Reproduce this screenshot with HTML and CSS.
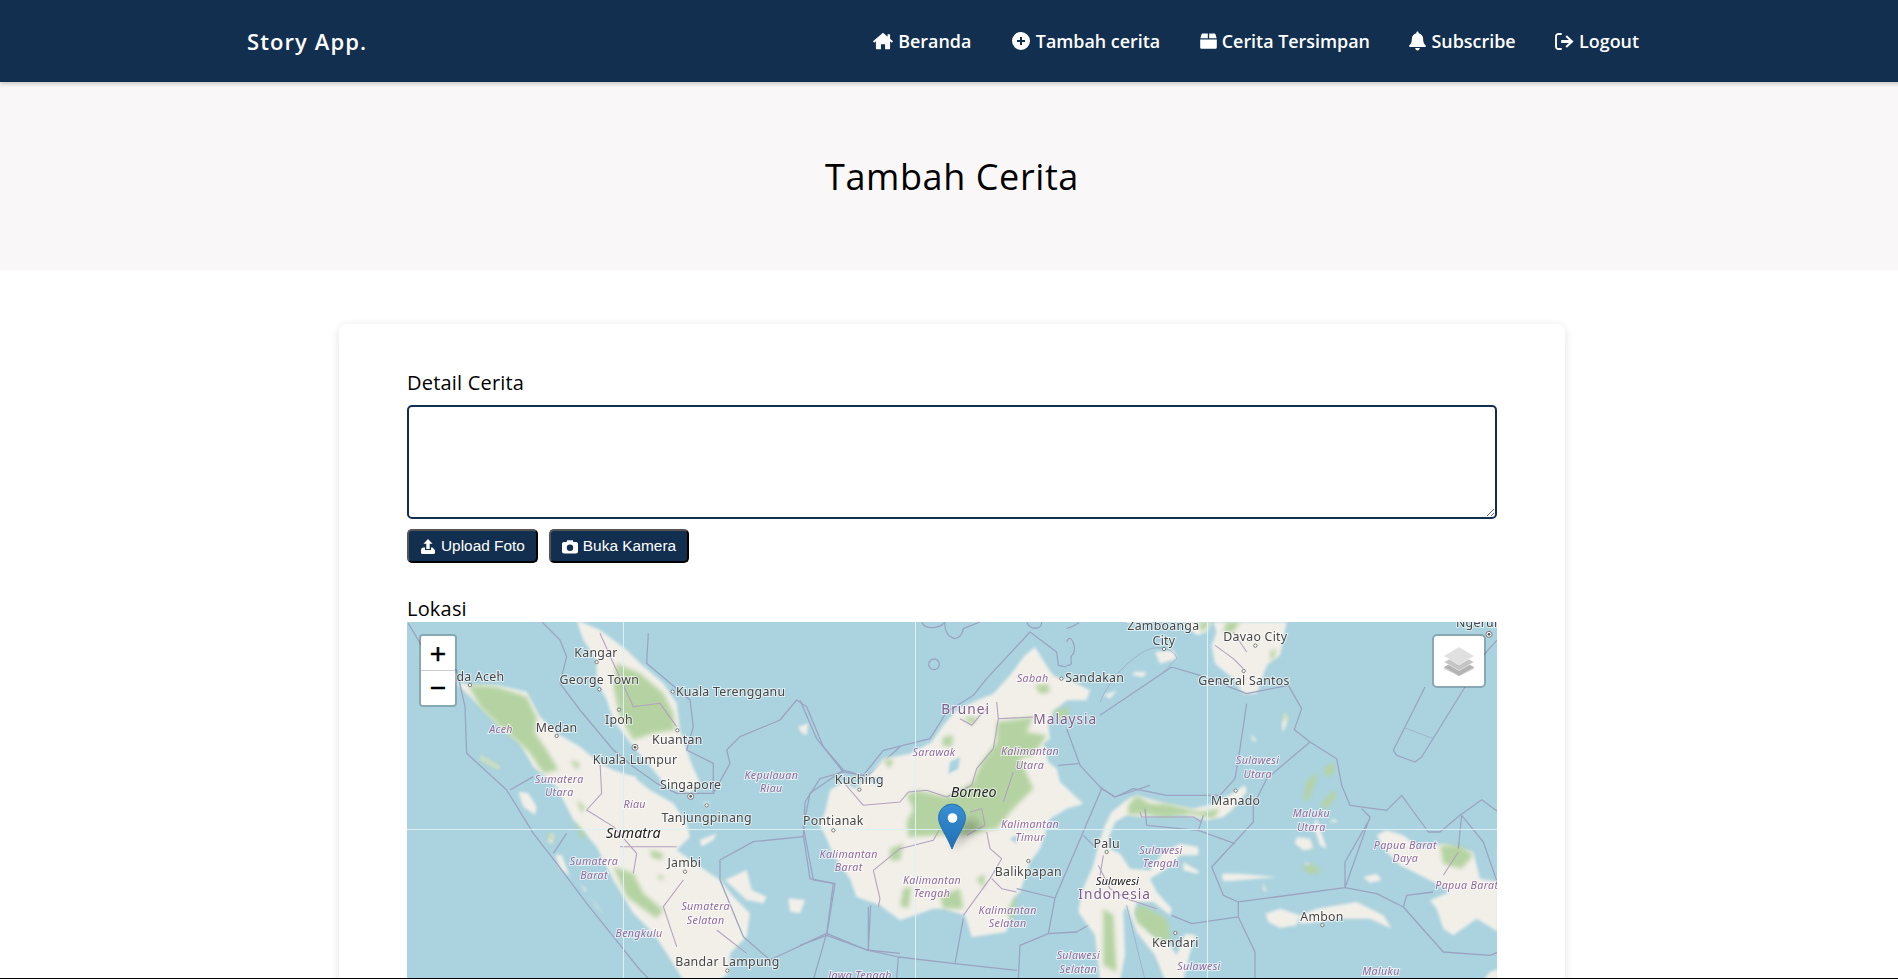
FILE: index.html
```html
<!DOCTYPE html>
<html lang="id">
<head>
    <meta charset="utf-8">
    <title>Story App.</title>
    <link rel="stylesheet" href="styles.css">
</head>
<body>
    <header class="topbar">
        <a class="brand" href="#">Story App.</a>
        <nav class="topnav">
            <a href="#"><svg class="ico ico-home" viewBox="0 0 24 20"><path d="M12 0 0 10.400 1.400 12 3.500 10.300V19c0 .6.400 1 1 1H9.500v-6h5v6h5c.6 0 1-.4 1-1v-8.700L22.600 12 24 10.400 20.500 7.400V2h-3v2.800z"/></svg>Beranda</a>
            <a href="#"><svg class="ico ico-plus" viewBox="0 0 20 20"><path fill-rule="evenodd" d="M10 1a9 9 0 1 0 0 18 9 9 0 0 0 0-18zM9 6h2v3h3v2h-3v3H9v-3H6V9h3z"/></svg>Tambah cerita</a>
            <a href="#"><svg class="ico ico-box" viewBox="0 0 18 18"><path d="M3 1h5.300v5H.4L1.500 2.200C1.700 1.500 2.300 1 3 1zM9.700 1H15c.7 0 1.300.5 1.500 1.200L17.600 6H9.700zM.2 7.300h17.600V15.500c0 1-.7 1.700-1.700 1.700H1.900c-1 0-1.700-.7-1.700-1.700z"/></svg>Cerita Tersimpan</a>
            <a href="#"><svg class="ico ico-bell" viewBox="0 0 18 20"><path d="M9 0c-.7 0-1.200.5-1.200 1.200v.7C5 2.400 3 4.800 3 7.800c0 4.300-1.500 5.500-2.600 6.700-.6.700-.2 1.800.8 1.800h15.600c1 0 1.400-1.100.8-1.800C16.500 13.300 15 12.100 15 7.800c0-3-2-5.400-4.800-5.900v-.7C10.200.5 9.700 0 9 0zM6.600 17.400c0 1.400 1.100 2.600 2.400 2.600s2.400-1.200 2.400-2.600z"/></svg>Subscribe</a>
            <a href="#"><svg class="ico ico-out" viewBox="0 0 20 18"><path d="M7 2H3.500C2.700 2 2 2.700 2 3.500v11c0 .8.700 1.500 1.500 1.500H7v2H3.500C1.600 18 0 16.400 0 14.500v-11C0 1.600 1.600 0 3.500 0H7z"/><path d="M12.500 2.500 19.600 9l-7.100 6.500-1.500-1.400 3.700-3.600H6.500v-3h8.200L11 4z"/></svg>Logout</a>
        </nav>
    </header>

    <section class="hero">
        <h1>Tambah Cerita</h1>
    </section>

    <main class="card">
        <label class="field-label" for="description">Detail Cerita</label>
        <textarea id="description" class="story-input"></textarea>
        <div class="photo-actions">
            <button class="btn" type="button"><svg class="btn-ico" viewBox="0 0 16 15"><path d="M8 0l4.500 4.800H9.700V10H6.300V4.800H3.500z"/><path d="M3.500 8.500H5V11h6V8.500h1.500L15 11v2.500c0 .8-.6 1.500-1.500 1.500h-11C1.600 15 1 14.300 1 13.500V11c0-1.400 1.100-2.500 2.500-2.500z"/></svg>Upload Foto</button>
            <button class="btn" type="button"><svg class="btn-ico" viewBox="0 0 16 14"><path fill-rule="evenodd" d="M5.200.8 4.600 2.500H2C.9 2.500 0 3.400 0 4.500V12c0 1.100.9 2 2 2h12c1.100 0 2-.9 2-2V4.500c0-1.100-.9-2-2-2h-2.600L10.800.8zM8 5a3.200 3.200 0 1 1 0 6.400A3.200 3.200 0 0 1 8 5z"/></svg>Buka Kamera</button>
        </div>

        <div class="field-label location-label">Lokasi</div>
        <div class="map">
            <svg class="map-art" viewBox="407 622 1090 357" width="1090" height="357">
                <rect class="sea" x="407" y="622" width="1090" height="357"/>

                <g class="z4">
                    <path class="land" d="M165 185L210 195 290 195 380 215 420 290 470 340 540 380 600 430 640 450 700 470 750 510 820 550 860 610 870 650 830 690 900 740 960 780 1000 830 1050 880 1040 950 990 1000 985 1060 960 1080 850 1080 800 1000 760 940 700 880 640 780 590 680 520 600 470 500 400 440 360 370 300 320 240 260 190 210Z"/>
                    <path class="land" d="M530 0L600 30 680 90 720 130 790 190 830 250 840 330 870 420 900 490 870 520 800 500 760 450 700 380 640 300 620 240 590 180 590 120 550 60Z"/>
                    <path class="land" d="M240 405L300 440 295 448 245 420ZM355 515L385 520 410 560 405 585 370 560ZM450 640L462 645 458 672 445 665ZM465 705L485 705 510 770 480 745ZM540 790L560 810 555 815ZM570 825L610 885 590 860ZM975 780L1040 750 1055 810 1100 830 1090 850 1040 840ZM1165 835L1215 840 1200 880 1170 875ZM680 470L710 470 700 495 685 490ZM900 660L950 640 940 660 905 680ZM1195 320L1225 310 1220 345 1205 340ZM910 545L930 550 920 565Z"/>
                    <path class="green" d="M205 195L290 200 380 230 410 290 405 340 440 390 475 450 430 460 390 400 360 370 300 320 240 260Z"/>
                    <path class="green" d="M650 130L720 160 790 220 820 280 825 330 760 340 700 360 660 290 640 200Z"/>
                    <path class="green" d="M640 740L700 760 730 820 790 870 770 895 720 860 680 830Z"/>
                    <path class="green" d="M750 690L790 700 785 720 755 712ZM770 770L790 765 788 782ZM520 600L560 650 545 655ZM240 405L300 440 295 448 245 420ZM440 640L462 645 458 672ZM510 420L540 430 530 450ZM530 540L555 560 545 580Z"/>
                    <path class="sea-line" d="M25 10L90 120 170 150 195 260 200 400 320 510 400 640 470 730 560 850 640 950 720 1050 750 1080"/>
                    <path class="sea-line" d="M420 0L480 60 500 110 480 190 540 270 640 390 700 440 770 490 830 520 940 520 990 430 980 390 1020 350 1140 300 1190 240 1220 260 1270 380 1330 450 1400 470 1500 380"/>
                    <path class="sea-line" d="M745 40L740 130 870 240 880 320 860 390 940 430 940 520M1330 450L1230 520 1210 620 1240 780 1300 790 1280 940M1210 650L1060 665 960 720 960 780 1030 950 1110 1020 1280 940 1400 990 1500 1000M1280 940L1240 1080M330 510L400 470M460 700L500 640M1405 860V990"/>
                    <path class="state-line" d="M600 430L605 520 560 570 640 620 710 700 700 760M660 680L830 680M850 780L790 860 800 890 830 980M600 40L640 130 700 260 780 250 830 320M950 930L1040 1000"/>
                </g>

                <g class="z8">
                    <path class="land" d="M90 505L130 480 165 500 200 470 250 410 330 395 395 360 430 310 470 265 520 240 555 225 580 215 630 160 675 100 705 75 745 140 765 165 800 170 870 205 860 235 800 235 760 270 745 310 750 350 730 365 745 420 770 440 780 480 850 545 800 560 750 590 720 680 690 720 660 810 640 830 620 930 515 945 495 880 430 860 400 860 300 895 240 850 170 825 150 770 100 700 80 650 60 610 75 570Z"/>
                    <path class="green" d="M590 300L700 285 680 330 740 340 700 400 660 410 700 500 640 560 590 620 560 625 500 640 410 640 325 645 320 600 340 560 320 520 350 505 440 525 520 480 545 420 590 360Z"/>
                    <path class="green" d="M430 345L460 340 455 375 425 370ZM270 680L310 665 300 715 270 715ZM705 190L745 185 750 210 720 215ZM490 285L535 285 515 310ZM420 820L480 800 490 860 430 860ZM250 415L280 410 270 440ZM760 265L810 255 800 290 770 290ZM620 870L650 815 640 900ZM310 800L335 795 325 860 300 850ZM530 770L555 755 550 800Z"/>
                    <path class="water" d="M450 420L480 405 475 440 445 455ZM630 650L650 640 650 665ZM185 470L250 465 235 490Z"/>
                    <path class="sea-line" d="M130 450L50 350 0 235M130 450L190 460 250 385 390 350 440 270 520 220 560 170 690 30 770 90 775 130 800 135M130 450L60 470 15 540 10 640 30 770 105 785 80 940 0 970M80 940L205 985 295 1005 465 1025 650 1045M205 985L212 850M465 1025L490 890M295 1005L290 1070M650 800L765 828 905 500 945 525 1050 490M765 828L745 935 660 970 655 1070M745 935L830 930 890 895M800 320L840 430 905 500M775 430L835 425M850 640L890 680"/>
                    <circle class="sea-line" cx="402" cy="127" r="16"/>
                    <path class="sea-line" d="M365 0C375 25 420 20 435 0M435 0C430 50 480 70 490 20L540 0M800 60C810 30 830 70 820 95 800 110 830 130 800 130M680 0C690 25 725 25 725 0M800 20C830 10 840 0 835 0"/>
                    <path class="state-line" d="M130 480L190 550 300 540 325 510 380 505 440 525 515 490 530 440 580 380 595 290 700 285M480 290L515 310 540 280 560 260M590 240L595 290M220 745L240 830 235 855M220 745L300 680 400 655 420 620M560 630L570 680 605 710 570 770 490 880M575 770L605 800 650 810M510 570L545 560 555 610 500 640M640 450L610 540"/>
                </g>

                <g class="z9">
                    <path class="land" d="M435 490L440 510 400 560 370 585 320 595 260 580 200 575 130 585 80 580 45 600 25 650 30 680 60 695 90 740 150 745 190 690 240 665 295 675 295 700 240 700 200 740 150 770 170 810 215 860 210 880 160 840 110 840 105 880 150 930 210 970 230 1000 255 935 290 940 270 990 250 1075 195 1075 165 1000 110 930 80 850 70 870 75 1000 60 1075 0 1075 -15 940 -65 870 -55 810 -20 730 -5 670 15 610 35 570 85 530 110 520 200 545 280 560 340 545 395 515Z"/>
                    <path class="land" d="M340 0H560L540 100 500 130 470 215 430 215 400 170 345 125 335 70 350 30ZM250 0H335L320 30 290 40 270 20ZM165 90L220 85 230 110 180 125ZM365 755L420 755 530 765 420 775 370 778ZM490 780L500 810 490 805ZM600 880L650 860 770 840 850 880 875 920 810 890 720 890 660 900 600 905ZM497 875L540 860 600 880 590 910 540 918 505 900ZM830 640L860 625 910 640 960 680 1030 665 1120 690 1140 770 1195 780 1195 930 1130 890 1060 940 1030 920 1010 860 990 835 1050 810 1000 780 960 760 900 730 860 690ZM790 765L830 755 845 775 810 782ZM1170 1050L1195 1040V1075H1150ZM555 270L565 290 550 330 545 310ZM452 335L470 355 460 360ZM590 645L630 650 640 680 610 685 585 665ZM650 590L680 680 660 670 640 610ZM700 590L715 600 690 600ZM610 720L640 730 620 730ZM10 220L50 205 30 230ZM100 150L140 150 130 165 100 160ZM250 720L300 750 290 755 250 745Z"/>
                    <path class="green" d="M85 550L110 520 150 545 200 545 300 570 360 560 340 590 270 575 190 585 130 575 85 580Z"/>
                    <path class="green" d="M105 860L130 850 200 890 215 960 170 950 110 900ZM10 860L40 880 50 1050 10 1030ZM670 440L700 420 705 450 680 465ZM640 460L655 455 625 535 610 535 620 480ZM660 550L700 505 710 520 680 560ZM605 735L635 725 665 750 630 755ZM1020 670L1080 670 1120 700 1085 740 1030 725ZM380 0H420L400 30 370 30ZM510 90L530 80 515 125ZM555 270L565 290 555 300 550 285ZM300 0H330L315 25 300 25ZM630 685L640 680 640 690Z"/>
                    <path class="sea-line" d="M0 280L215 135 300 160 440 215 565 190 605 260 583 323 630 360 710 410 725 490 750 550 860 565 905 520 985 630 1020 630 1080 580 1145 533 1195 570M440 245L420 380 405 470 360 520 200 520 100 500 45 525 0 495M630 360L500 470 460 550 460 600 335 735 370 820 415 840 415 885 465 990 465 1075M415 840L735 797 810 585 785 560M735 797V720L810 590M735 797L830 815 910 855 1030 990 1170 1000 1195 990M910 855L920 820 1000 810M1085 580L1075 680M1085 580L1150 660 1195 790M140 610L295 625 405 665M135 560L140 610M295 625L310 580M215 880L275 905 415 885M975 195L880 385 890 400 945 420 965 405 1095 195M1150 100L1195 50"/>
                    <path class="thin-line" d="M915 318L1000 350"/>
                    <path class="thin-line" d="M0 240C30 170 80 120 130 90 180 60 230 90 230 110L190 150M80 850L135 1075"/>
                    <path class="state-line" d="M120 570L125 585 280 585 305 600M345 70L400 110 430 140M400 30L440 90M1030 760L1075 690M-5 730L30 800 80 830 170 860M10 700L0 760"/>
                </g>

                <path class="tile-line" d="M623.500 622V979M915.500 622V979M1207.500 622V979M407 829.500H1497"/>

                <g class="z4">
                    <text class="city" x="588" y="112">Kangar</text>
                    <text class="city end" x="313" y="182">Banda Aceh</text>
                    <text class="city" x="598" y="192">George Town</text>
                    <text class="city" x="992" y="228">Kuala Terengganu</text>
                    <text class="city" x="657" y="313">Ipoh</text>
                    <text class="city" x="470" y="335">Medan</text>
                    <text class="city" x="832" y="373">Kuantan</text>
                    <text class="city" x="705" y="432">Kuala Lumpur</text>
                    <text class="city" x="872" y="507">Singapore</text>
                    <text class="city" x="920" y="606">Tanjungpinang</text>
                    <text class="island" x="700" y="654">Sumatra</text>
                    <text class="city" x="853" y="741">Jambi</text>
                    <text class="city" x="982" y="1039">Bandar Lampung</text>
                    <text class="state" x="303" y="338">Aceh</text>
                    <text class="state" x="478" y="488">Sumatera</text>
                    <text class="state" x="478" y="529">Utara</text>
                    <text class="state" x="704" y="563">Riau</text>
                    <text class="state" x="1114" y="476">Kepulauan</text>
                    <text class="state" x="1114" y="517">Riau</text>
                    <text class="state" x="582" y="736">Sumatera</text>
                    <text class="state" x="582" y="777">Barat</text>
                    <text class="state" x="917" y="871">Sumatera</text>
                    <text class="state" x="917" y="912">Selatan</text>
                    <text class="state" x="717" y="952">Bengkulu</text>
                    <circle class="dot" cx="210" cy="195" r="5"/>
                    <circle class="dot" cx="590" cy="126" r="5"/>
                    <circle class="dot" cx="598" cy="208" r="5"/>
                    <circle class="dot" cx="818" cy="215" r="5"/>
                    <circle class="dot" cx="657" cy="269" r="5"/>
                    <circle class="dot" cx="470" cy="348" r="5"/>
                    <circle class="dot" cx="832" cy="331" r="5"/>
                    <circle class="dot" cx="705" cy="382" r="9"/>
                    <circle class="dot-core" cx="705" cy="382" r="4"/>
                    <circle class="dot" cx="872" cy="529" r="9"/>
                    <circle class="dot-core" cx="872" cy="529" r="4"/>
                    <circle class="dot" cx="920" cy="556" r="5"/>
                    <circle class="dot" cx="855" cy="755" r="5"/>
                    <circle class="dot" cx="982" cy="1052" r="5"/>
                </g>

                <g class="z8">
                    <text class="state" x="698" y="180">Sabah</text>
                    <text class="city" x="884" y="180">Sandakan</text>
                    <text class="country" x="497" y="276">Brunei</text>
                    <text class="country" x="796" y="306">Malaysia</text>
                    <text class="state" x="402" y="402">Sarawak</text>
                    <text class="state" x="690" y="399">Kalimantan</text>
                    <text class="state" x="690" y="440">Utara</text>
                    <text class="island" x="521" y="524">Borneo</text>
                    <text class="city" x="178" y="487">Kuching</text>
                    <text class="city" x="100" y="610">Pontianak</text>
                    <text class="state" x="690" y="617">Kalimantan</text>
                    <text class="state" x="690" y="657">Timur</text>
                    <text class="city" x="685" y="761">Balikpapan</text>
                    <text class="state" x="146" y="707">Kalimantan</text>
                    <text class="state" x="146" y="748">Barat</text>
                    <text class="state" x="396" y="785">Kalimantan</text>
                    <text class="state" x="396" y="826">Tengah</text>
                    <text class="state" x="623" y="875">Kalimantan</text>
                    <text class="state" x="623" y="916">Selatan</text>
                    <text class="city" x="920" y="678">Palu</text>
                    <text class="island small" x="952" y="788">Sulawesi</text>
                    <text class="country" x="944" y="832">Indonesia</text>
                    <text class="state" x="835" y="1012">Sulawesi</text>
                    <text class="state" x="835" y="1052">Selatan</text>
                    <text class="state" x="180" y="1072">Jawa Tengah</text>
                    <circle class="dot" cx="784" cy="170" r="5"/>
                    <circle class="dot" cx="178" cy="503" r="5"/>
                    <circle class="dot" cx="100" cy="625" r="5"/>
                    <circle class="dot" cx="685" cy="717" r="5"/>
                    <circle class="dot" cx="920" cy="690" r="5"/>
                </g>

                <g class="z9">
                    <text class="city" x="190" y="24">Zamboanga</text>
                    <text class="city" x="192" y="68">City</text>
                    <text class="city" x="466" y="56">Davao City</text>
                    <text class="city" x="432" y="188">General Santos</text>
                    <text class="city start" x="1068" y="16">Ngerulmud</text>
                    <text class="state" x="473" y="426">Sulawesi</text>
                    <text class="state" x="473" y="467">Utara</text>
                    <text class="city" x="407" y="548">Manado</text>
                    <text class="state" x="634" y="585">Maluku</text>
                    <text class="state" x="634" y="626">Utara</text>
                    <text class="state" x="183" y="695">Sulawesi</text>
                    <text class="state" x="183" y="735">Tengah</text>
                    <text class="state" x="916" y="680">Papua Barat</text>
                    <text class="state" x="916" y="721">Daya</text>
                    <text class="state start" x="1006" y="802">Papua Barat</text>
                    <text class="city" x="666" y="896">Ambon</text>
                    <text class="city" x="226" y="974">Kendari</text>
                    <text class="state" x="297" y="1045">Sulawesi</text>
                    <text class="state" x="843" y="1060">Maluku</text>
                    <circle class="dot" cx="192" cy="81" r="5"/>
                    <circle class="dot" cx="466" cy="71" r="5"/>
                    <circle class="dot" cx="431" cy="147" r="5"/>
                    <circle class="dot" cx="1167" cy="37" r="9"/>
                    <circle class="dot-core" cx="1167" cy="37" r="4"/>
                    <circle class="dot" cx="407" cy="506" r="5"/>
                    <circle class="dot" cx="667" cy="909" r="5"/>
                    <circle class="dot" cx="226" cy="933" r="5"/>
                </g>

                <defs>
                    <linearGradient id="pinFill" x1="0" y1="0" x2="0" y2="1">
                        <stop offset="0" stop-color="#3a8fd3"/>
                        <stop offset="1" stop-color="#1f6fb5"/>
                    </linearGradient>
                </defs>
                <path class="pin-shadow" d="M952 849L982 828 972 818 960 826Z"/>
                <path class="pin" d="M952 849C947 836 938.500 826 938.500 817.500A13.500 13.500 0 0 1 965.500 817.500C965.500 826 957 836 952 849Z"/>
                <circle class="pin-hole" cx="952.500" cy="818" r="4.800"/>
            </svg>

            <div class="zoom-ctl">
                <a class="zoom-btn" href="#">+</a>
                <a class="zoom-btn" href="#">&minus;</a>
            </div>
            <div class="layers-ctl">
                <svg viewBox="0 0 30 29" width="30" height="29">
                    <path fill="#b3b3b3" d="M15 12 30 20 15 29 0 20Z"/>
                    <path fill="#8f8f8f" opacity=".4" d="M0 20 15 29 30 20V22L15 29 0 22Z"/>
                    <path fill="#c4c4c4" stroke="#f4f4f4" stroke-width=".6" d="M15 7 30 15 15 23.500 0 15Z"/>
                    <path fill="#e0e0e0" stroke="#f4f4f4" stroke-width=".6" d="M15 0 30 9 15 18 0 9Z"/>
                </svg>
            </div>
        </div>
    </main>

    <div class="fold-line"></div>
</body>
</html>
```

FILE: styles.css
```css
html {
    overflow: hidden;
}

body {
    position: relative;
    width: 1904px;
    height: 979px;
    margin: 0;
    overflow: hidden;
    background: #fff;
    color: #000;
    font-family: "Open Sans", sans-serif;
}

a {
    color: inherit;
    text-decoration: none;
}

/* header */
.topbar {
    position: relative;
    z-index: 2;
    display: flex;
    align-items: center;
    justify-content: space-between;
    height: 82px;
    padding: 0 265px 0 247px;
    background: #122f50;
    box-shadow: 0 2px 4px rgba(0, 0, 0, .2);
    color: #fff;
}

.brand {
    font-size: 22px;
    font-weight: 600;
    letter-spacing: 1.100px;
}

.topnav {
    display: flex;
    gap: 39.500px;
}

.topnav a {
    display: flex;
    align-items: center;
    font-size: 17.900px;
    font-weight: 600;
}

.ico {
    margin-right: 5px;
    fill: currentColor;
}

.ico-home { width: 20px; height: 18px; }
.ico-plus { width: 20px; height: 20px; }
.ico-box { width: 17px; height: 18px; }
.ico-bell { width: 17px; height: 20px; }
.ico-out { width: 19px; height: 17px; }

/* page title */
.hero {
    display: flex;
    align-items: center;
    justify-content: center;
    height: 188px;
    background: #f9f7f8;
}

.hero h1 {
    margin: 0;
    font-size: 36px;
    font-weight: 400;
    letter-spacing: .600px;
}

/* form */
.card {
    width: 1090px;
    height: 700px;
    margin: 54px auto 0;
    padding: 46px 68px;
    border-radius: 8px;
    box-shadow: 0 2px 10px rgba(0, 0, 0, .12);
}

.field-label {
    display: block;
    font-size: 20px;
    line-height: 25px;
    letter-spacing: .2px;
}

.story-input {
    display: block;
    box-sizing: border-box;
    width: 1090px;
    height: 114px;
    margin: 10px 0 0;
    border: 2px solid #122f50;
    border-radius: 5px;
    outline: none;
}

.photo-actions {
    display: flex;
    gap: 11px;
    margin-top: 10px;
}

.btn {
    display: flex;
    align-items: center;
    height: 34px;
    padding: 0 11px;
    border: 2px outset #555;
    border-color: #555 #111 #111 #555;
    border-radius: 5px;
    background: #122f50;
    color: #fff;
    font-family: "Liberation Sans", sans-serif;
    font-size: 15.400px;
}

.btn-ico {
    width: 16px;
    height: 15px;
    margin-right: 5px;
    fill: currentColor;
}

.location-label {
    margin-top: 33px;
}

/* map */
.map {
    position: relative;
    width: 1090px;
    height: 357px;
    margin-top: 1px;
    overflow: hidden;
}

.map-art {
    display: block;
    filter: blur(.45px);
}

.sea { fill: #aad3df; }
.water { fill: #aad3df; filter: blur(3px); }
.land { fill: #f2efe9; filter: blur(4px); }
.green { fill: #b5d3a2; filter: blur(6px); }

.sea-line,
.state-line,
.thin-line,
.tile-line {
    fill: none;
    stroke-linejoin: round;
}

.sea-line {
    stroke: #9ba3c0;
    stroke-width: 3.800;
}

.state-line {
    stroke: #b3a1bf;
    stroke-width: 3.200;
}

.thin-line {
    stroke: #9ba3c0;
    stroke-width: 2;
}

.tile-line {
    stroke: #dcf1f6;
    stroke-width: 1;
}

.z4 { transform: translate(400px, 620px) scale(.33333); }
.z8 { transform: translate(800px, 622px) scale(.33333); }
.z9 { transform: translate(1100px, 622px) scale(.33333); }

.map-art text {
    font-family: "Noto Sans", sans-serif;
    text-anchor: middle;
    paint-order: stroke;
    stroke: rgba(255, 255, 255, .65);
    stroke-width: 6px;
}

.map-art .end { text-anchor: end; }
.map-art .start { text-anchor: start; }

.city {
    font-size: 37px;
    letter-spacing: .8px;
    fill: #454545;
}

.state {
    font-size: 32px;
    font-style: italic;
    letter-spacing: 1px;
    fill: #8e6a9c;
}

.island {
    font-size: 43px;
    font-style: italic;
    fill: #222;
}

.island.small {
    font-size: 34px;
}

.country {
    font-size: 41px;
    letter-spacing: 3px;
    fill: #7d5c8c;
}

.dot {
    fill: #fff;
    stroke: #666;
    stroke-width: 2.500;
}

.dot-core { fill: #555; }

.pin {
    fill: url(#pinFill);
    stroke: #2a71ad;
    stroke-width: 1;
}

.pin-hole { fill: #fff; }

.pin-shadow {
    fill: rgba(0, 0, 0, .22);
    filter: blur(4px);
}

/* map controls */
.zoom-ctl {
    position: absolute;
    top: 12px;
    left: 12px;
    border: 2px solid rgba(0, 0, 0, .2);
    border-radius: 4px;
    background-clip: padding-box;
}

.zoom-btn {
    display: block;
    width: 34px;
    height: 34px;
    background: #fff;
    color: #000;
    font-family: "Liberation Sans", sans-serif;
    font-size: 28px;
    line-height: 36px;
    text-align: center;
    -webkit-text-stroke: .5px #000;
}

.zoom-btn:first-child {
    border-bottom: 1px solid #ccc;
    border-radius: 2px 2px 0 0;
}

.zoom-btn:last-child {
    line-height: 34px;
    border-radius: 0 0 2px 2px;
}

.layers-ctl {
    position: absolute;
    top: 12px;
    right: 11px;
    display: flex;
    align-items: center;
    justify-content: center;
    width: 50px;
    height: 50px;
    border: 2px solid rgba(0, 0, 0, .2);
    border-radius: 5px;
    background: #fff;
    background-clip: padding-box;
}

.fold-line {
    position: absolute;
    right: 0;
    bottom: 0;
    left: 0;
    height: 1px;
    background: #000;
}
```
